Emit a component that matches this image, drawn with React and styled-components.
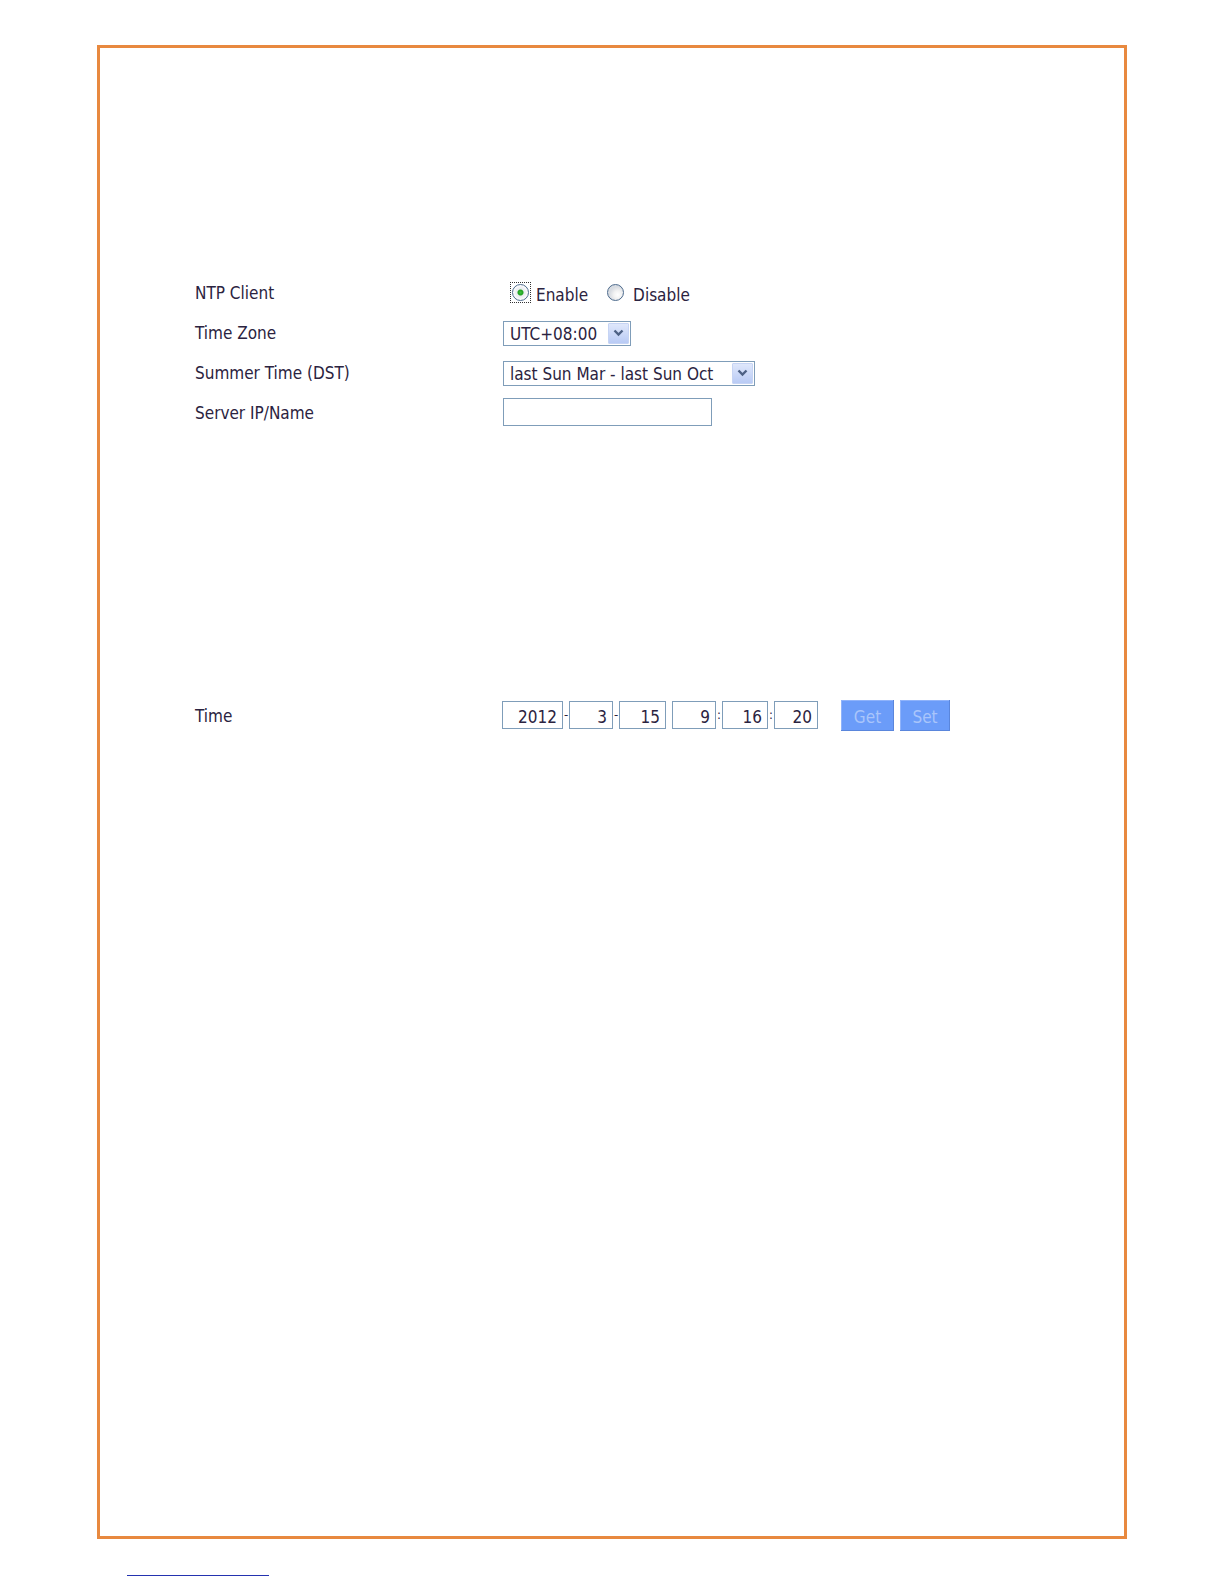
import React from 'react';
import styled, { createGlobalStyle } from 'styled-components';

const GlobalStyle = createGlobalStyle`
  html, body {
    margin: 0;
    padding: 0;
    background: #ffffff;
  }
  body {
    font-family: "DejaVu Sans Condensed", "DejaVu Sans", sans-serif;
    font-stretch: condensed;
    font-size: 17px;
    color: #2b2340;
  }
`;

const Page = styled.div`
  width: 1224px;
  height: 1584px;
  padding-top: 45px;
  box-sizing: border-box;
`;

const Frame = styled.div`
  margin-left: 97px;
  width: 1030px;
  height: 1494px;
  border: 3px solid #e8893f;
  box-sizing: border-box;
  padding: 224px 0 0 95px;
`;

const Form = styled.div`
  display: grid;
  grid-template-columns: 308px 1fr;
  grid-auto-rows: 40px;
  align-items: center;
`;

const TimeForm = styled(Form)`
  margin-top: 263px;
`;

const Label = styled.div`
  line-height: 20px;
  padding-top: ${p => (p.$drop ? p.$drop : 2)}px;
`;

const Field = styled.div`
  display: flex;
  align-items: center;
`;

const RadioOption = styled.label`
  display: flex;
  align-items: center;
  margin-right: 16px;
  line-height: 20px;
`;

const RadioText = styled.span`
  padding-top: 5px;
`;

const FocusBox = styled.span`
  display: flex;
  align-items: center;
  justify-content: center;
  width: 21px;
  height: 21px;
  box-sizing: border-box;
  border: 1px dotted ${p => (p.$focused ? '#333' : 'transparent')};
  margin: ${p => (p.$focused ? '0 5px 0 7px' : '0 7px 0 1px')};
`;

const RadioDot = styled.span`
  display: block;
  width: 17px;
  height: 17px;
  border-radius: 50%;
  box-sizing: border-box;
  border: 1px solid #4c6a8c;
  background: ${p =>
    p.$checked
      ? 'radial-gradient(circle, #3ec33e 0, #21a121 2.5px, #e8eaee 3.5px, #ffffff 8px)'
      : 'radial-gradient(circle at 65% 65%, #ffffff 0, #f2f2f2 4px, #d8dce2 8px)'};
`;

const Select = styled.div`
  display: flex;
  align-items: center;
  justify-content: space-between;
  width: ${p => p.$width}px;
  height: 25px;
  margin-top: 2px;
  box-sizing: border-box;
  border: 1px solid #7f9db9;
  padding: 0 1px 0 6px;
  background: #fff;
`;

const SelectText = styled.span`
  line-height: 20px;
  padding-top: 2px;
  white-space: nowrap;
`;

const ArrowButton = styled.span`
  display: flex;
  align-items: center;
  justify-content: center;
  width: 21px;
  height: 21px;
  border-radius: 1px;
  background: linear-gradient(#dfe7fb, #b9cbf5);
  border: 1px solid #c6d4f4;
  box-sizing: border-box;
`;

const TextInput = styled.div`
  width: ${p => p.$width}px;
  height: 28px;
  box-sizing: border-box;
  border: 1px solid #7f9db9;
  background: #fff;
  text-align: right;
  padding: 2px 5px 0 0;
  line-height: 26px;
`;

const Sep = styled.span`
  width: ${p => p.$width}px;
  text-align: center;
  font-size: 13px;
  line-height: 28px;
`;

const Button = styled.button`
  width: ${p => p.$width}px;
  height: 31px;
  margin-left: ${p => p.$gap}px;
  border: none;
  background: #6b9cf9;
  color: #a9c5fb;
  font-family: inherit;
  font-stretch: condensed;
  font-size: 17px;
  padding: 3px 0 0;
  box-shadow: inset -1px -1px 0 #5a86dc, inset 1px 1px 0 #8fb3fb;
`;

const FooterLink = styled.div`
  margin: 36px 0 0 127px;
  width: 142px;
  height: 1px;
  background: #2433b0;
`;

const Chevron = () => (
  <svg width="11" height="8" viewBox="0 0 11 8">
    <path d="M1.5 1.5 L5.5 5.5 L9.5 1.5" fill="none" stroke="#4d6185" strokeWidth="2.4" />
  </svg>
);

const timeParts = [
  { value: '2012', width: 61, sep: '-' },
  { value: '3', width: 44, sep: '-' },
  { value: '15', width: 47, sep: ' ' },
  { value: '9', width: 44, sep: ':' },
  { value: '16', width: 46, sep: ':' },
  { value: '20', width: 44 },
];

export default function App() {
  return (
    <Page>
      <GlobalStyle />
      <Frame>
        <Form>
          <Label>NTP Client</Label>
          <Field>
            <RadioOption>
              <FocusBox $focused>
                <RadioDot $checked />
              </FocusBox>
              <RadioText>Enable</RadioText>
            </RadioOption>
            <RadioOption>
              <FocusBox>
                <RadioDot />
              </FocusBox>
              <RadioText>Disable</RadioText>
            </RadioOption>
          </Field>

          <Label>Time Zone</Label>
          <Field>
            <Select $width={128}>
              <SelectText>UTC+08:00</SelectText>
              <ArrowButton><Chevron /></ArrowButton>
            </Select>
          </Field>

          <Label>Summer Time (DST)</Label>
          <Field>
            <Select $width={252}>
              <SelectText>last Sun Mar - last Sun Oct</SelectText>
              <ArrowButton><Chevron /></ArrowButton>
            </Select>
          </Field>

          <Label $drop={1}>Server IP/Name</Label>
          <Field>
            <TextInput $width={209} />
          </Field>
        </Form>

        <TimeForm>
          <Label>Time</Label>
          <Field style={{ marginLeft: -1 }}>
            {timeParts.map(part => (
              <React.Fragment key={part.value}>
                <TextInput $width={part.width}>{part.value}</TextInput>
                {part.sep && <Sep $width={6}>{part.sep}</Sep>}
              </React.Fragment>
            ))}
            <Button type="button" $width={53} $gap={23}>Get</Button>
            <Button type="button" $width={50} $gap={6}>Set</Button>
          </Field>
        </TimeForm>
      </Frame>
      <FooterLink />
    </Page>
  );
}
